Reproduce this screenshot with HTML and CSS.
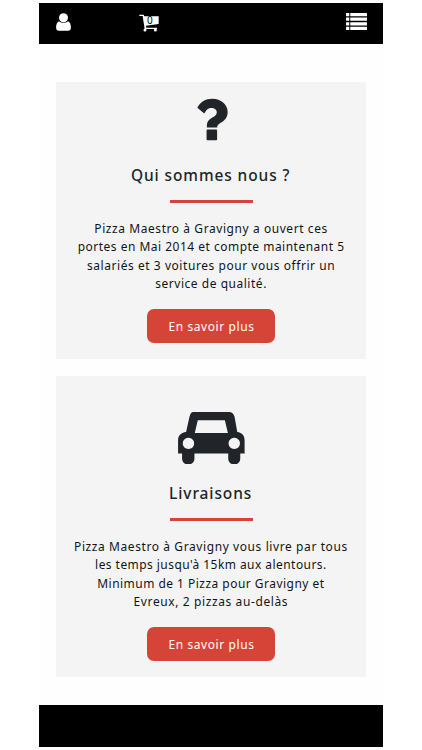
FILE: index.html
```html
<!DOCTYPE html>
<html lang="fr">
<head>
<meta charset="utf-8">
<title>Pizza Maestro</title>
<link rel="stylesheet" href="styles.css">
</head>
<body>
<div class="page">
  <header class="topbar">
    <svg class="user" viewBox="0 0 46 56"><ellipse cx="23" cy="15" rx="14" ry="14.5"/><path d="M9 26C2 29 0 37 0 46c0 6 3 9 9 9h28c6 0 9-3 9-9 0-9-2-17-9-20-8 7-20 7-28 0z"/></svg>
    <div class="cart">
      <svg viewBox="0 0 60 54"><path d="M1 2h13l2 5h43v23l-38 5 1 6h32v4H17L11 6H1z"/><circle cx="18" cy="48" r="4.5"/><circle cx="49" cy="48" r="4.5"/></svg>
      <span class="count">0</span>
    </div>
    <svg class="menu" viewBox="0 0 64 52"><path d="M0 0h10v10H0zM13 0h51v10H13zM0 14h10v10H0zM13 14h51v10H13zM0 28h10v10H0zM13 28h51v10H13zM0 42h10v10H0zM13 42h51v10H13z"/></svg>
  </header>
  <main>
    <section class="card about">
      <svg class="question" viewBox="231 53 94 128"><path d="M232 81C242 63 256 54 278 54c25 0 46 17 46 40 0 16-8 25-20 32-8 5-12 8-12 15h-31v-6c0-13 8-19 18-25 8-4 12-8 12-15 0-8-7-13-16-13-10 0-15 5-22 17zM263 147h26q3 0 3 3v27q0 3-3 3h-26q-3 0-3-3v-27q0-3 3-3z"/></svg>
      <h2><span>Qui sommes nous ?</span></h2>
      <hr>
      <p><span class="l1">Pizza Maestro à Gravigny a ouvert ces</span><span class="l2">portes en Mai 2014 et compte maintenant 5</span><span class="l3">salariés et 3 voitures pour vous offrir un</span><span class="l4">service de qualité.</span></p>
      <a class="button"><span>En savoir plus</span></a>
    </section>
    <section class="card delivery">
      <svg class="car" viewBox="84 125 200 157"><path fill-rule="evenodd" d="M130 125h106c10 0 14 5 17 14l8 46c15 2 22 11 22 25v39h-13v15c0 24-36 24-36 0v-15H133v15c0 24-37 24-37 0v-15H84v-39c0-14 8-23 24-25l10-45c3-10 5-15 12-15zM143 150l-9 38h99l-9-38zM115 202a17 17 0 1 0 .1 0zM252 202a17 17 0 1 0 .1 0z"/></svg>
      <h2><span>Livraisons</span></h2>
      <hr>
      <p><span class="l5">Pizza Maestro à Gravigny vous livre par tous</span><span class="l6">les temps jusqu'à 15km aux alentours.</span><span class="l7">Minimum de 1 Pizza pour Gravigny et</span><span class="l8">Evreux, 2 pizzas au-delàs</span></p>
      <a class="button"><span>En savoir plus</span></a>
    </section>
  </main>
  <footer></footer>
</div>
</body>
</html>
```
FILE: styles.css
```css
* { box-sizing: border-box; }
body { margin: 0; background: #fff; color: #212529; font-family: "Noto Sans", sans-serif; }
.page { width: 344px; height: 747px; margin-left: 39px; padding-top: 3px; background: #fefefe; display: flex; flex-direction: column; }
.topbar { height: 41px; background: #000; fill: #fff; display: flex; align-items: flex-start; padding: 10px 16px 0 17px; flex: none; }
.user { width: 15px; height: 18px; }
.cart { position: relative; width: 20px; height: 18px; margin: 1px 0 0 68px; }
.cart svg { display: block; width: 20px; height: 18px; }
.count { position: absolute; left: 8px; top: 1px; font-size: 10px; line-height: 11px; color: #000; }
.menu { width: 21px; height: 17px; margin-left: auto; }
main { flex: 1; padding: 37.5px 17px 0; display: flex; flex-direction: column; gap: 17px; }
.card { width: 310px; background: #f4f4f4; display: flex; flex-direction: column; align-items: center; }
.about { height: 277.5px; padding-top: 16px; }
.delivery { height: 301px; padding-top: 35.5px; }
.card > svg { fill: #212529; flex: none; }
.question { width: 31px; height: 43px; margin-left: 2px; }
.car { width: 67px; height: 52.5px; }
h2 { margin: 22px 0 0; font-size: 17px; line-height: 24px; font-weight: 500; letter-spacing: 1px; white-space: nowrap; transform: scaleX(0.91); }
.delivery h2 { margin-top: 17px; }
hr { width: 83px; height: 2.5px; background: #d64438; border: 0; margin: 13.5px 0 0; }
.delivery hr { margin-top: 13px; }
p { margin: 16.7px 0 0; color: #111417; font-size: 13.2px; line-height: 18.3px; text-align: center; white-space: nowrap; transform: scaleX(0.907); }
p span { display: block; }
.l1 { letter-spacing: 0.65px; }
.l2 { letter-spacing: 0.56px; }
.l3 { letter-spacing: 0.63px; }
.l4 { letter-spacing: 0.6px; }
.l5 { letter-spacing: 0.67px; }
.l6 { letter-spacing: 0.51px; }
.l7 { letter-spacing: 0.54px; }
.l8 { letter-spacing: 0.69px; }
.button { width: 128px; height: 34px; margin-top: 16.5px; border-radius: 7px; background: #d64438; color: #fff; font-size: 13.2px; line-height: 34px; text-align: center; letter-spacing: 0.67px; }
.button span { display: inline-block; transform: scaleX(0.907); }
footer { height: 42px; background: #000; flex: none; }
```
